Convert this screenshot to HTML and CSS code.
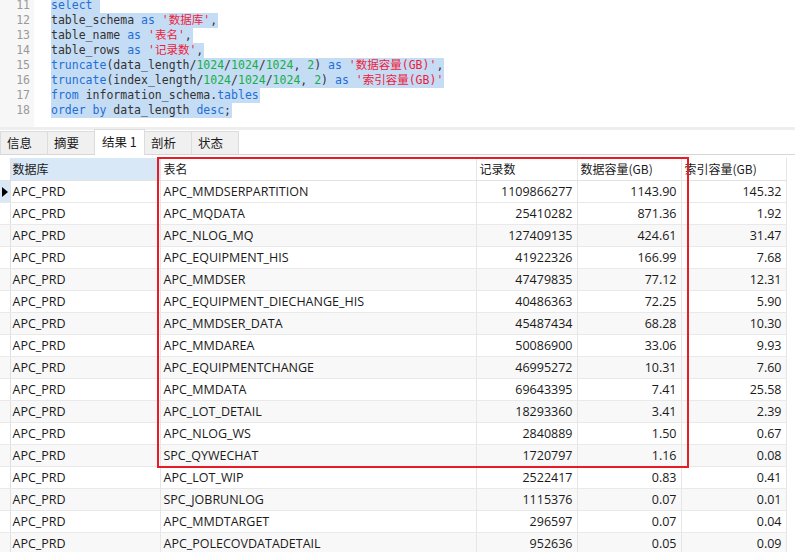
FILE: index.html
```html
<!DOCTYPE html>
<html lang="zh">
<head>
<meta charset="utf-8">
<link rel="stylesheet" href="styles.css">
</head>
<body>
<div class="editor">
  <div class="gutter">
    <div class="lines">
      <div>11</div><div>12</div><div>13</div><div>14</div><div>15</div><div>16</div><div>17</div><div>18</div>
    </div>
  </div>
  <div class="code">
    <div class="lines">
      <div class="ln"><span class="sel"><span class="kw">select</span> </span></div>
      <div class="ln"><span class="sel">table_schema <span class="kw">as</span> <span class="str">'数据库'</span>,</span></div>
      <div class="ln"><span class="sel">table_name <span class="kw">as</span> <span class="str">'表名'</span>,</span></div>
      <div class="ln"><span class="sel">table_rows <span class="kw">as</span> <span class="str">'记录数'</span>,</span></div>
      <div class="ln"><span class="sel"><span class="kw">truncate</span>(data_length/<span class="num">1024</span>/<span class="num">1024</span>/<span class="num">1024</span>, <span class="num">2</span>) <span class="kw">as</span> <span class="str">'数据容量(GB)'</span>,</span></div>
      <div class="ln"><span class="sel"><span class="kw">truncate</span>(index_length/<span class="num">1024</span>/<span class="num">1024</span>/<span class="num">1024</span>, <span class="num">2</span>) <span class="kw">as</span> <span class="str">'索引容量(GB)'</span></span></div>
      <div class="ln"><span class="sel"><span class="kw">from</span> information_schema.<span class="kw">tables</span></span></div>
      <div class="ln"><span class="sel"><span class="kw">order by</span> data_length <span class="kw">desc</span>;</span></div>
    </div>
  </div>
</div>
<div class="band"></div>
<div class="tabs">
  <div class="tab">信息</div>
  <div class="tab">摘要</div>
  <div class="tab active">结果 1</div>
  <div class="tab">剖析</div>
  <div class="tab">状态</div>
</div>
<div class="results">
<table class="grid">
  <colgroup>
    <col class="c0"><col class="c1"><col class="c2"><col class="c3"><col class="c4"><col class="c5">
  </colgroup>
  <thead>
    <tr><th class="ind"></th><th class="cur">数据库</th><th>表名</th><th>记录数</th><th>数据容量(GB)</th><th>索引容量(GB)</th></tr>
  </thead>
  <tbody>
    <tr class="selrow"><td class="ind"><span class="arrow"></span></td><td>APC_PRD</td><td>APC_MMDSERPARTITION</td><td class="n">1109866277</td><td class="n">1143.90</td><td class="n">145.32</td></tr>
    <tr><td class="ind"></td><td>APC_PRD</td><td>APC_MQDATA</td><td class="n">25410282</td><td class="n">871.36</td><td class="n">1.92</td></tr>
    <tr><td class="ind"></td><td>APC_PRD</td><td>APC_NLOG_MQ</td><td class="n">127409135</td><td class="n">424.61</td><td class="n">31.47</td></tr>
    <tr><td class="ind"></td><td>APC_PRD</td><td>APC_EQUIPMENT_HIS</td><td class="n">41922326</td><td class="n">166.99</td><td class="n">7.68</td></tr>
    <tr><td class="ind"></td><td>APC_PRD</td><td>APC_MMDSER</td><td class="n">47479835</td><td class="n">77.12</td><td class="n">12.31</td></tr>
    <tr><td class="ind"></td><td>APC_PRD</td><td>APC_EQUIPMENT_DIECHANGE_HIS</td><td class="n">40486363</td><td class="n">72.25</td><td class="n">5.90</td></tr>
    <tr><td class="ind"></td><td>APC_PRD</td><td>APC_MMDSER_DATA</td><td class="n">45487434</td><td class="n">68.28</td><td class="n">10.30</td></tr>
    <tr><td class="ind"></td><td>APC_PRD</td><td>APC_MMDAREA</td><td class="n">50086900</td><td class="n">33.06</td><td class="n">9.93</td></tr>
    <tr><td class="ind"></td><td>APC_PRD</td><td>APC_EQUIPMENTCHANGE</td><td class="n">46995272</td><td class="n">10.31</td><td class="n">7.60</td></tr>
    <tr><td class="ind"></td><td>APC_PRD</td><td>APC_MMDATA</td><td class="n">69643395</td><td class="n">7.41</td><td class="n">25.58</td></tr>
    <tr><td class="ind"></td><td>APC_PRD</td><td>APC_LOT_DETAIL</td><td class="n">18293360</td><td class="n">3.41</td><td class="n">2.39</td></tr>
    <tr><td class="ind"></td><td>APC_PRD</td><td>APC_NLOG_WS</td><td class="n">2840889</td><td class="n">1.50</td><td class="n">0.67</td></tr>
    <tr><td class="ind"></td><td>APC_PRD</td><td>SPC_QYWECHAT</td><td class="n">1720797</td><td class="n">1.16</td><td class="n">0.08</td></tr>
    <tr><td class="ind"></td><td>APC_PRD</td><td>APC_LOT_WIP</td><td class="n">2522417</td><td class="n">0.83</td><td class="n">0.41</td></tr>
    <tr><td class="ind"></td><td>APC_PRD</td><td>SPC_JOBRUNLOG</td><td class="n">1115376</td><td class="n">0.07</td><td class="n">0.01</td></tr>
    <tr><td class="ind"></td><td>APC_PRD</td><td>APC_MMDTARGET</td><td class="n">296597</td><td class="n">0.07</td><td class="n">0.04</td></tr>
    <tr><td class="ind"></td><td>APC_PRD</td><td>APC_POLECOVDATADETAIL</td><td class="n">952636</td><td class="n">0.05</td><td class="n">0.09</td></tr>
  </tbody>
</table>
<div class="highlight-box"></div>
</div>
</body>
</html>
```
FILE: styles.css
```css
html, body {
  margin: 0;
  padding: 0;
  background: #ffffff;
  overflow: hidden;
}
body {
  width: 795px;
  height: 552px;
  font-family: "Open Sans", "Noto Sans CJK SC", sans-serif;
  font-size: 12.5px;
  color: #1a1a1a;
}

/* ---------- editor ---------- */
.editor {
  display: flex;
  height: 127px;
  overflow: hidden;
  background: #ffffff;
}
.gutter {
  width: 34px;
  background: #f7f7f7;
  flex: none;
}
.code {
  flex: 1;
  padding-left: 17px;
}
.lines {
  margin-top: -2px;
  font-family: "DejaVu Sans Mono", "Noto Sans CJK SC", monospace;
  font-size: 11.5px;
  line-height: 15px;
}
.gutter .lines {
  text-align: right;
  padding-right: 4px;
  color: #9a9a9a;
}
.code .lines {
  color: #333333;
}
.ln {
  height: 15px;
  white-space: pre;
}
.sel {
  background: #c5dcf5;
  padding-right: 1px;
  display: inline-block;
  height: 15px;
  vertical-align: top;
}
.kw { color: #1f6fd6; }
.str { color: #ee1c3c; }
.num { color: #14b046; }

/* ---------- band and tabs ---------- */
.band {
  height: 3px;
  background: #eeeeee;
}
.tabs {
  display: flex;
  align-items: flex-end;
  height: 24px;
  border-bottom: 1px solid #d6d6d6;
}
.tab {
  box-sizing: border-box;
  height: 23px;
  padding: 0 6px;
  line-height: 22px;
  background: #f0f0f0;
  border: 1px solid #dcdcdc;
  border-bottom: none;
  margin-right: -1px;
  font-family: "Noto Sans CJK SC", sans-serif;
  font-size: 12.5px;
  color: #1a1a1a;
  min-width: 48px;
}
.tab.active {
  background: #ffffff;
  height: 26px;
  line-height: 24px;
  margin-bottom: -1px;
  min-width: 51px;
  padding-left: 7px;
}

/* ---------- results grid ---------- */
.results {
  position: relative;
  padding-top: 3px;
}
.grid {
  border-collapse: collapse;
  table-layout: fixed;
  width: 786px;
}
.c0 { width: 10px; }
.c1 { width: 150px; }
.c2 { width: 316px; }
.c3 { width: 101px; }
.c4 { width: 104px; }
.c5 { width: 105px; }
.grid th, .grid td {
  height: 20px;
  line-height: 20px;
  padding: 1px 4px 0 2px;
  border-right: 1px solid #e6e6e6;
  border-bottom: 1px solid #e9e9e9;
  white-space: nowrap;
  overflow: hidden;
  text-align: left;
  font-weight: normal;
  vertical-align: middle;
}
.grid th {
  height: 22px;
  line-height: 22px;
  padding-top: 0;
  font-family: "Noto Sans CJK SC", sans-serif;
  font-size: 12px;
  color: #1a1a1a;
  border-bottom: 1px solid #e2e2e2;
  padding-left: 2px;
}
.grid th:nth-child(n+3), .grid td:nth-child(n+3) {
  padding-left: 3px;
}
.grid th.cur {
  background: #d9e8f7;
}
.grid .ind {
  padding: 0;
  border-right: 1px solid #e0e0e0;
}
.grid td.n {
  text-align: right;
  padding-right: 4px;
}
.grid tbody tr:nth-child(odd) td {
  background: #f8f8f8;
}
.grid tbody tr.selrow td {
  background: #ffffff;
}
.grid tbody tr.selrow td.ind {
  background: #d9e8f7;
}
.arrow {
  display: block;
  width: 0;
  height: 0;
  margin-left: 2px;
  border-top: 5px solid transparent;
  border-bottom: 5px solid transparent;
  border-left: 6px solid #000000;
}

/* annotation overlay drawn over the grid */
.highlight-box {
  position: absolute;
  left: 157px;
  top: 2px;
  width: 528px;
  height: 307px;
  border: 2px solid #e81c24;
}
```
